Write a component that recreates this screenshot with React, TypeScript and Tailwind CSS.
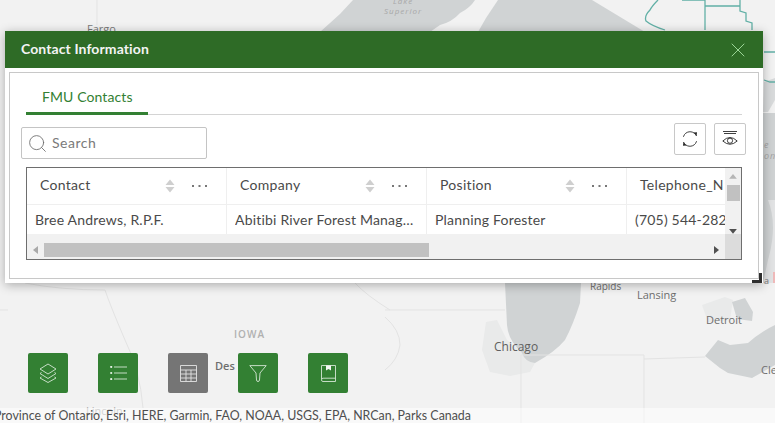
import React from 'react';
import { X, Search } from 'lucide-react';

const uiFont = { fontFamily: 'Lato, "Open Sans", sans-serif' };
const mapFont = { fontFamily: '"Open Sans", sans-serif' };

function SortArrows() {
    return (
        <svg width="10" height="14" viewBox="0 0 10 14" className="shrink-0">
            <path d="M5 0.5 L9.5 6 H0.5 Z M5 13.5 L0.5 8 H9.5 Z" fill="#cfcfcf" />
        </svg>
    );
}

function Dots() {
    return (
        <svg width="15" height="4" viewBox="0 0 15 4" className="block">
            <rect x="0" y="1" width="2" height="2" fill="#777777" />
            <rect x="6.5" y="1" width="2" height="2" fill="#777777" />
            <rect x="13" y="1" width="2" height="2" fill="#777777" />
        </svg>
    );
}

function HeaderCell({ label }: { label: string }) {
    return (
        <div className="w-[200px] h-[36px] shrink-0 flex items-center pb-[1px] pl-[13px] border-r border-[#efefef] text-[14px] tracking-[0.3px] text-[#4a4a4a]">
            <span className="w-[125px] pb-[2px]">{label}</span>
            <SortArrows />
            <span className="ml-[17px]"><Dots /></span>
        </div>
    );
}

function BodyCell({ text }: { text: string }) {
    return (
        <div className="w-[200px] h-[29px] shrink-0 flex items-center px-[8px] border-r border-[#efefef] text-[14px] tracking-[0.2px] text-[#4a4a4a]">
            <span className="truncate">{text}</span>
        </div>
    );
}

function ToolButton({ active, children }: { active?: boolean; children: React.ReactNode }) {
    return (
        <button className={`w-[40px] h-[40px] rounded-[2px] flex items-center justify-center ${active ? 'bg-[#757575]' : 'bg-[#338033]'}`}>
            {children}
        </button>
    );
}

export default function App() {
    return (
        <div className="relative w-[775px] h-[423px] overflow-hidden bg-[#f2f2f2]" style={uiFont}>
            {/* basemap */}
            <svg className="absolute inset-0" width="775" height="423" viewBox="0 0 775 423">
                <path d="M320 32 L340 14 L353 0 H475 Q470 8 460 13 Q452 22 440 25 L430 32 Z" fill="#d0d3d4" />
                <path d="M478 32 L486 18 L498 0 H592 L645 32 Z" fill="#d0d3d4" />
                <path d="M763 113 H775 V283 H763 Z" fill="#cfd2d3" />
                <path d="M764 82 L775 78 V100 L768 112 H763 Z" fill="#d8dadb" />
                <path d="M768 200 Q778 225 768 260 L763 283 H775 V200 Z" fill="#e2e3e4" />
                <path d="M486 322 L497 320 L507 340 L522 353 L535 363 L530 372 L510 376 L490 372 L482 350 Z" fill="#e9eaea" />
                <path d="M505 283 H581 L580 303 Q573 325 565 340 Q555 352 535 363 Q525 362 522 353 Q508 340 507 325 Z" fill="#d0d3d4" />
                <path d="M702 305 L725 297 L733 300 L730 320 L708 322 Z" fill="#e9eaea" />
                <path d="M732 302 L745 298 L753 312 L752 321 L737 319 Z" fill="#d0d3d4" />
                <path d="M775 325 Q760 332 748 343 L730 345 L718 340 L705 356 L720 368 L728 373 L752 378 L775 365 Z" fill="#d0d3d4" />
                <path d="M97 0 V25 M25 283 Q60 290 105 290 Q110 305 125 340 Q140 370 143 408 M0 310 H8 M355 283 Q366 295 390 310 M385 310 H505 M521 355 H644 V423 M521 355 V423 M644 359 L705 357 M385 317 Q400 330 400 345 Q398 360 385 370" stroke="#e3e3e3" strokeWidth="1" fill="none" />
                <path d="M658 0 Q652 6 650 10 Q644 16 646 21 Q652 26 665 30" stroke="#62b0a6" strokeWidth="1.3" fill="none" />
                <path d="M682 0 H705 V30 M705 6 H740 V0 M740 6 V11 L746 13 V21 L752 23 V30 M764 52 H775 M764 80 L770 82 H775" stroke="#62b0a6" strokeWidth="1.3" fill="none" />
                <rect x="773" y="272" width="2" height="11" fill="#efb9b9" />
            </svg>

            {/* map labels */}
            <div style={mapFont}>
                <span className="absolute left-[87px] top-[21px] text-[11px] text-[#7a7a7a]">Fargo</span>
                <span className="absolute left-[384px] top-[-4px] text-[8px] italic leading-[10px] tracking-[1px] text-center text-[#a8a8a8]">Lake<br />Superior</span>
                <span className="absolute left-[590px] top-[279px] text-[10px] text-[#6e6e6e]">Rapids</span>
                <span className="absolute left-[637px] top-[287px] text-[11px] text-[#6e6e6e]">Lansing</span>
                <span className="absolute left-[706px] top-[312px] text-[11px] text-[#6e6e6e]">Detroit</span>
                <span className="absolute left-[494px] top-[338px] text-[12px] text-[#5f5f5f]">Chicago</span>
                <span className="absolute left-[761px] top-[362px] text-[11px] text-[#6e6e6e]">Cle</span>
                <span className="absolute left-[234px] top-[327px] text-[10px] font-semibold tracking-[1px] text-[#b0b0b0]">IOWA</span>
                <span className="absolute left-[215px] top-[358px] text-[11px] font-semibold text-[#6e6e6e]">Des</span>
                <span className="absolute left-[764px] top-[138px] text-[9px] italic tracking-[1px] text-[#a4a4a4]">e</span>
                <span className="absolute left-[764px] top-[149px] text-[9px] italic tracking-[1px] text-[#a4a4a4]">on</span>
                <span className="absolute left-[764px] top-[274px] text-[9px] text-[#7a7a7a]">a</span>
                <span className="absolute left-[86px] top-[403px] text-[11px] text-[#a8a8a8]">Lincoln</span>
            </div>

            {/* toolbar */}
            <div className="absolute left-[28px] top-[353px] flex gap-[30px]">
                <ToolButton>
                    <svg width="18" height="20" viewBox="0 0 18 20" fill="none" stroke="#d5e6d5" strokeWidth="0.9">
                        <path d="M9 1 L17 6 L9 11 L1 6 Z" />
                        <path d="M2.5 9.5 L1 10.5 L9 15.5 L17 10.5 L15.5 9.5" />
                        <path d="M2.5 14 L1 15 L9 19.5 L17 15 L15.5 14" />
                    </svg>
                </ToolButton>
                <ToolButton>
                    <svg width="17" height="14" viewBox="0 0 17 14" fill="none" stroke="#d5e6d5" strokeWidth="0.9">
                        <path d="M4 1 H17 M4 7 H17 M4 13 H17" />
                        <circle cx="1.2" cy="1" r="1.1" fill="#e8f2e8" stroke="none" />
                        <circle cx="1.2" cy="7" r="1.1" fill="#e8f2e8" stroke="none" />
                        <circle cx="1.2" cy="13" r="1.1" fill="#e8f2e8" stroke="none" />
                    </svg>
                </ToolButton>
                <ToolButton active>
                    <svg width="17" height="17" viewBox="0 0 17 17" fill="none" stroke="#e3e3e3" strokeWidth="0.9">
                        <path d="M0.5 0.5 H16.5 V16.5 H0.5 Z M0.5 5 H16.5 M0.5 9 H16.5 M0.5 13 H16.5 M6 5 V16.5 M11 5 V16.5" />
                    </svg>
                </ToolButton>
                <ToolButton>
                    <svg width="18" height="17" viewBox="0 0 18 17" fill="none" stroke="#d5e6d5" strokeWidth="0.9">
                        <path d="M0.8 0.6 H17.2 L11 8 L10.5 15 Q10.4 16.5 9 16.5 Q7.6 16.5 7.5 15 L7 8 Z" />
                    </svg>
                </ToolButton>
                <ToolButton>
                    <svg width="15" height="17" viewBox="0 0 15 17" fill="none" stroke="#d5e6d5" strokeWidth="0.9">
                        <path d="M0.5 14 V0.5 H14.5 V16.5 H2 Q0.5 16.5 0.5 15 Q0.5 13.2 2 13.2 H14.5" />
                        <path d="M5 0.5 H10 V5.5 L7.5 4 L5 5.5 Z" fill="#f4f8f4" stroke="none" />
                    </svg>
                </ToolButton>
            </div>

            {/* attribution */}
            <div className="absolute left-0 right-0 bottom-0 h-[15px] bg-white/50 overflow-hidden whitespace-nowrap text-[12.4px] leading-[16px] text-[#4f4f4f]">
                <span className="ml-[-6px]">Province of Ontario, Esri, HERE, Garmin, FAO, NOAA, USGS, EPA, NRCan, Parks Canada</span>
            </div>

            {/* modal */}
            <div className="absolute left-[5px] top-[31px] w-[758px] h-[252px] bg-white flex flex-col shadow-[0_2px_10px_rgba(0,0,0,0.3)]">
                <div className="h-[37px] shrink-0 bg-[#2e6b26] flex items-center justify-between pl-[16px] pr-[13px]">
                    <span className="text-[14px] tracking-[0.1px] font-bold text-[#f4f4f4] pb-[2px]">Contact Information</span>
                    <X size={24} strokeWidth={1} color="#9bd596" />
                </div>
                <div className="flex-1 m-[4px] border border-[#c8c8c8] flex flex-col">
                    <div className="mx-[16px] h-[42px] shrink-0 border-b border-[#d4d4d4] flex">
                        <div className="w-[122px] h-[42px] border-b-[3px] border-[#338033] pt-[15px] pl-[16px] text-[14px] tracking-[0.1px] leading-[18px] text-[#338033]">
                            FMU Contacts
                        </div>
                    </div>
                    <div className="flex justify-between pl-[11px] pr-[12px] h-[45px] shrink-0 pt-[8px]">
                        <div className="mt-[4px] w-[186px] h-[32px] border border-[#c4c4c4] rounded-[2px] flex items-center pl-[5px] gap-[4px]">
                            <Search size={21} strokeWidth={1} color="#6e6e6e" />
                            <span className="text-[14px] tracking-[0.5px] text-[#7a7a7a] pb-[2px]">Search</span>
                        </div>
                        <div className="flex gap-[8px]">
                            <button className="w-[32px] h-[32px] border border-[#c8c8c8] rounded-[2px] flex items-center justify-center">
                                <svg width="16" height="16" viewBox="0 0 16 16" fill="none" stroke="#2a2a2a" strokeWidth="0.9">
                                    <path d="M14.5 5 A7 7 0 0 0 2.5 3.5 L1.4 5.8" />
                                    <path d="M1.5 11 A7 7 0 0 0 13.5 12.5 L14.6 10.2" />
                                    <path d="M11.6 1.6 L15 1.2 L14.6 5 Z" fill="#2a2a2a" stroke="none" />
                                    <path d="M4.4 14.4 L1 14.8 L1.4 11 Z" fill="#2a2a2a" stroke="none" />
                                </svg>
                            </button>
                            <button className="w-[32px] h-[32px] border border-[#c8c8c8] rounded-[2px] flex items-center justify-center">
                                <svg width="16" height="16" viewBox="0 0 16 16" fill="none" stroke="#2a2a2a" strokeWidth="0.9">
                                    <path d="M1 0.5 H15 M2 2.5 H14" />
                                    <path d="M0.8 10 Q8 3 15.2 10 Q8 16.5 0.8 10 Z" />
                                    <circle cx="8" cy="9.7" r="2.6" />
                                </svg>
                            </button>
                        </div>
                    </div>
                    <div className="ml-[16px] mt-[7px] w-[716px] h-[93px] border border-[#6e6e6e] relative overflow-hidden">
                        <div className="flex">
                            <HeaderCell label="Contact" />
                            <HeaderCell label="Company" />
                            <HeaderCell label="Position" />
                            <div className="flex-1 h-[36px] flex items-center pb-[3px] pl-[13px] text-[14px] tracking-[0.3px] text-[#4a4a4a] overflow-hidden whitespace-nowrap">Telephone_N</div>
                        </div>
                        <div className="flex border-t border-[#efefef]">
                            <BodyCell text="Bree Andrews, R.P.F." />
                            <BodyCell text="Abitibi River Forest Management Inc." />
                            <BodyCell text="Planning Forester" />
                            <div className="flex-1 h-[29px] flex items-center pl-[8px] text-[14px] tracking-[0.2px] text-[#4a4a4a] overflow-hidden whitespace-nowrap">(705) 544-282</div>
                        </div>
                        {/* vertical scrollbar */}
                        <div className="absolute right-0 top-0 w-[16px] h-[66px] bg-[#f1f1f1] flex flex-col items-center">
                            <svg width="8" height="5" viewBox="0 0 8 5" className="mt-[6px]"><path d="M4 0 L8 5 H0 Z" fill="#b5b5b5" /></svg>
                            <div className="mt-[6px] w-[13px] h-[17px] bg-[#c1c1c1]" />
                            <svg width="8" height="5" viewBox="0 0 8 5" className="mt-[28px]"><path d="M0 0 H8 L4 5 Z" fill="#505050" /></svg>
                        </div>
                        {/* horizontal scrollbar */}
                        <div className="absolute left-0 right-0 bottom-0 h-[25px] bg-[#f1f1f1] flex items-end">
                            <div className="w-[17px] h-[14px] mb-[2px] flex items-center justify-center">
                                <svg width="5" height="8" viewBox="0 0 5 8"><path d="M5 0 V8 L0 4 Z" fill="#a9a9a9" /></svg>
                            </div>
                            <div className="w-[385px] h-[14px] mb-[2px] bg-[#c1c1c1]" />
                            <div className="ml-[285px] h-[14px] mb-[2px] flex items-center">
                                <svg width="5" height="8" viewBox="0 0 5 8"><path d="M0 0 L5 4 L0 8 Z" fill="#505050" /></svg>
                            </div>
                            <div className="absolute right-0 bottom-0 w-[16px] h-[25px] bg-[#dcdcdc]" />
                        </div>
                    </div>
                </div>
                {/* resize grip */}
                <div className="absolute right-[1px] bottom-0 w-[10px] h-[10px] border-r-[3px] border-b-[3px] border-[#2e2e2e]" />
            </div>
        </div>
    );
}
